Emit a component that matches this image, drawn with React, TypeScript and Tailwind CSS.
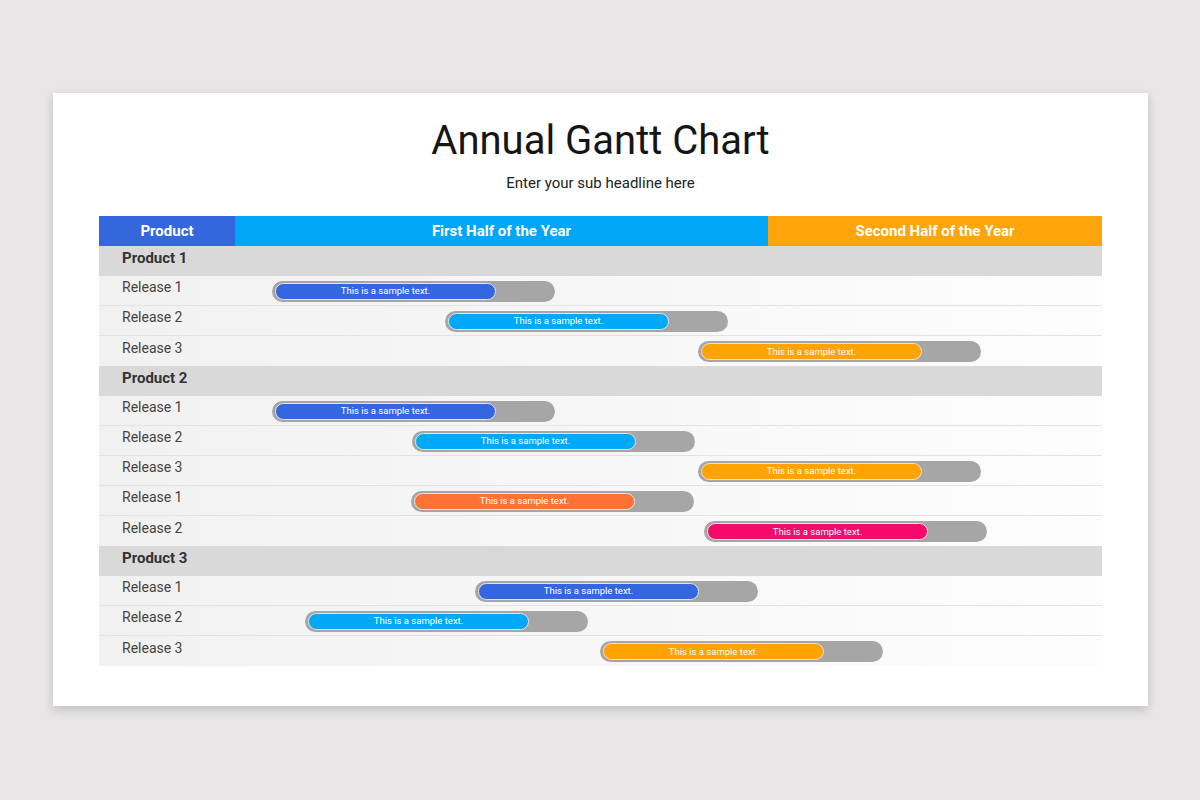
const BLUE = "bg-[#3467df]"
const SKY = "bg-[#00a8f5]"
const ORANGE = "bg-[#ffa300]"
const CORAL = "bg-[#ff7236]"
const PINK = "bg-[#f50a6b]"

type Release = { label: string; offset: number; color: string }

const sections: { name: string; rows: Release[] }[] = [
  {
    name: "Product 1",
    rows: [
      { label: "Release 1", offset: 37, color: BLUE },
      { label: "Release 2", offset: 210, color: SKY },
      { label: "Release 3", offset: 463, color: ORANGE },
    ],
  },
  {
    name: "Product 2",
    rows: [
      { label: "Release 1", offset: 37, color: BLUE },
      { label: "Release 2", offset: 177, color: SKY },
      { label: "Release 3", offset: 463, color: ORANGE },
      { label: "Release 1", offset: 176, color: CORAL },
      { label: "Release 2", offset: 469, color: PINK },
    ],
  },
  {
    name: "Product 3",
    rows: [
      { label: "Release 1", offset: 240, color: BLUE },
      { label: "Release 2", offset: 70, color: SKY },
      { label: "Release 3", offset: 365, color: ORANGE },
    ],
  },
]

function Bar({ offset, color }: { offset: number; color: string }) {
  return (
    <div
      className="flex h-[21px] w-[283px] items-center rounded-full bg-[#a6a6a6] pl-[3px]"
      style={{ marginLeft: offset }}
    >
      <div
        className={`flex h-[17px] w-[221px] items-center justify-center rounded-full border border-[#e4e4e4] ${color} text-[9.5px] leading-none text-white`}
      >
        This is a sample text.
      </div>
    </div>
  )
}

export default function App() {
  return (
    <div
      className="min-h-[800px] w-full bg-[#e8e6e7] pt-[93px]"
      style={{ fontFamily: "Roboto, 'Noto Sans', sans-serif" }}
    >
      <div className="ml-[53px] h-[613px] w-[1095px] bg-white pt-[16px] shadow-[0_4px_10px_rgba(0,0,0,0.18)]">
        {/* title */}
        <div className="text-center">
          <h1 className="text-[40px] leading-[64px] text-[#151515]">Annual Gantt Chart</h1>
          <p className="text-[15px] leading-[20px] text-[#222]">Enter your sub headline here</p>
        </div>

        {/* table */}
        <div className="ml-[46px] mt-[23px] w-[1003px]">
          <div className="flex h-[30px] text-[15px] font-bold text-white">
            <div className="flex w-[136px] items-center justify-center bg-[#3467db]">Product</div>
            <div className="flex w-[533px] items-center justify-center bg-[#00a6f7]">First Half of the Year</div>
            <div className="flex flex-1 items-center justify-center bg-[#fea50b]">Second Half of the Year</div>
          </div>

          {sections.map((section) => (
            <div key={section.name}>
              <div className="flex h-[30px] items-center bg-[#d9d9d9] pb-[5px] pl-[23px] text-[15px] font-bold text-[#333]">
                {section.name}
              </div>
              {section.rows.map((row, i) => (
                <div
                  key={i}
                  className="flex h-[30px] border-b border-[#e3e3e3] bg-gradient-to-r from-[#f1f1f1] to-[#fdfdfd] last:border-b-0"
                >
                  <div className="flex w-[136px] items-center pb-[6px] pl-[23px] text-[14px] text-[#444]">
                    {row.label}
                  </div>
                  <div className="flex flex-1 items-center pt-[1px]">
                    <Bar offset={row.offset} color={row.color} />
                  </div>
                </div>
              ))}
            </div>
          ))}
        </div>
      </div>
    </div>
  )
}
